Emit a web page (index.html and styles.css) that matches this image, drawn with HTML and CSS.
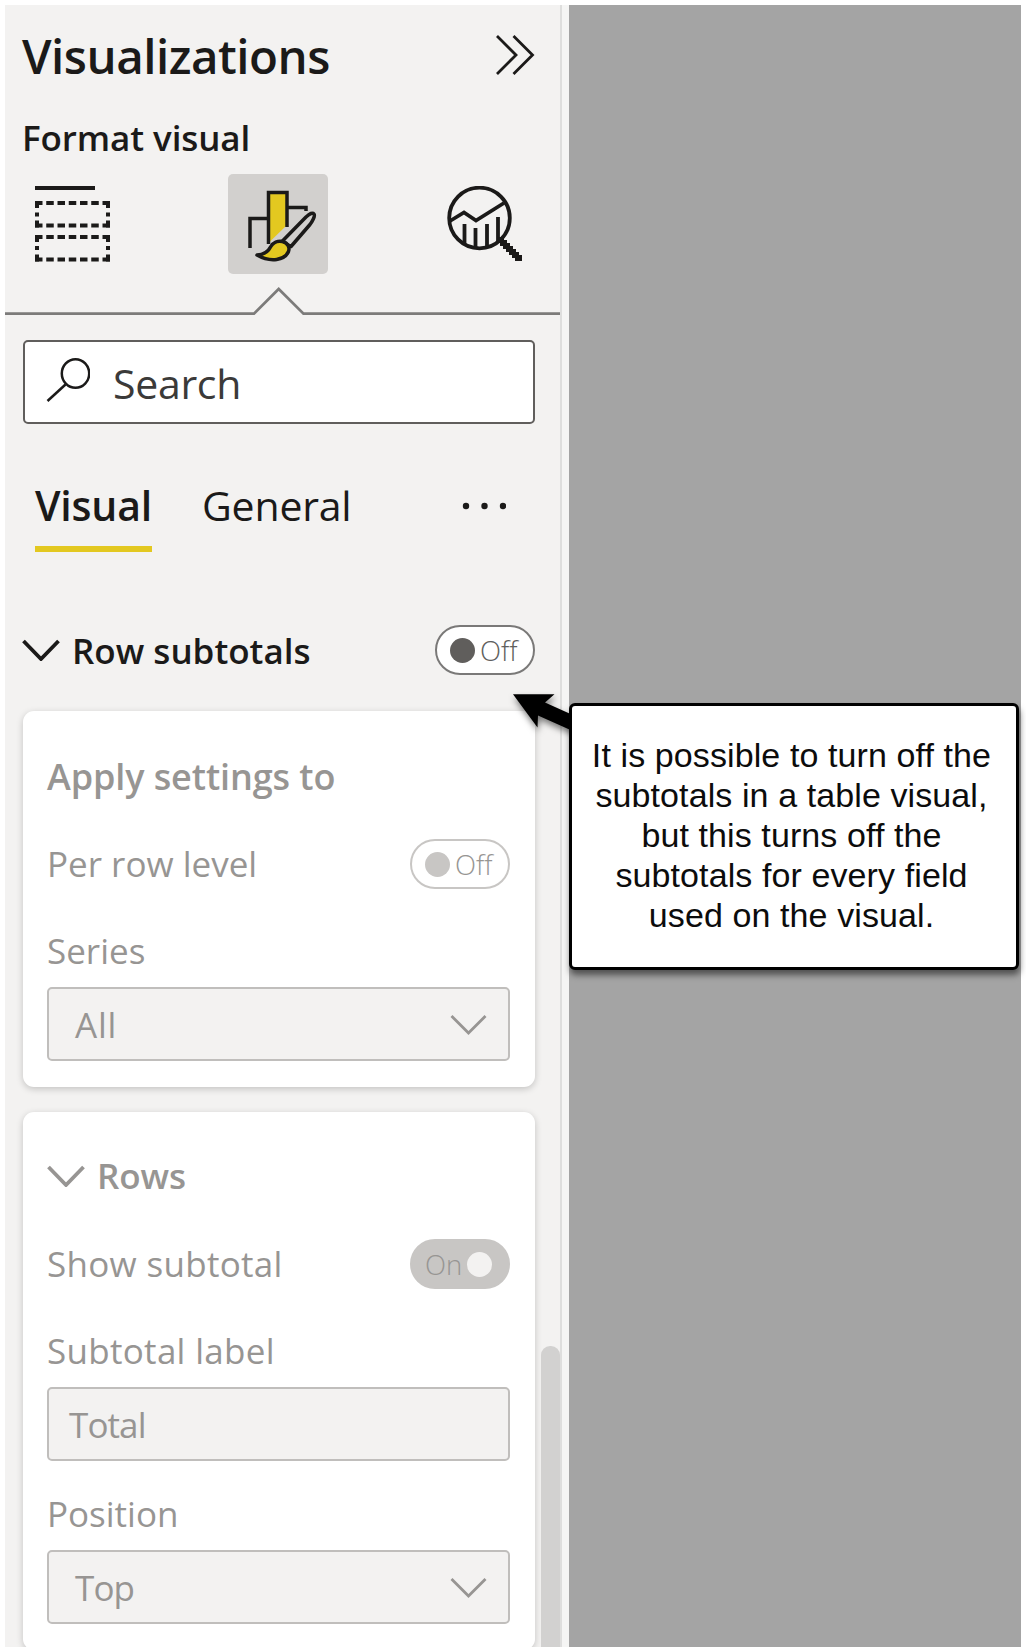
FILE: index.html
```html
<!DOCTYPE html>
<html lang="en">
<head>
<meta charset="utf-8">
<title>Visualizations</title>
<link rel="stylesheet" href="styles.css">
</head>
<body>
<main class="app">
  <section class="pane">
    <header class="pane-header">
      <h1 class="pane-title">Visualizations</h1>
      <svg class="collapse" width="40" height="42" viewBox="0 0 40 42"><path d="M2 2 21 21 2 40M18.500 2 37.500 21 18.500 40"/></svg>
    </header>
    <h2 class="pane-subtitle">Format visual</h2>
    <nav class="modes">
      <svg class="mode-fields" width="76" height="76" viewBox="0 0 76 76">
        <path d="M0 2H60" stroke-width="4"/>
        <g stroke-width="4" stroke-dasharray="7.500 3.750">
          <path d="M0 17H75M0 39.500H75M0 51H75M0 73.500H75" stroke-dashoffset="0"/>
        </g>
        <path d="M2 15V22M2 34.500V41.500M73 15V22M73 34.500V41.500M2 49V56M2 68.500V75.500M73 49V56M73 68.500V75.500M2 26.500V30.500M73 26.500V30.500M2 60V64M73 60V64" stroke-width="4"/>
      </svg>
      <div class="mode-format">
        <svg width="100" height="100" viewBox="0 0 100 100">
          <path class="bar" d="M40.500 18.500H59V51L40.500 69Z"/>
          <path class="ink" d="M22 74V44.500H39M40.500 70V18.500H59V53M60 33.500H78V37"/>
          <path class="handle" d="M54 67.500 78 43Q84 37.500 86 40C87.500 42 84 48 82 50.500L63 72.500Z"/>
          <path class="brush" d="M29 81C37 80.500 40.500 77 42.500 73C45 68.500 50 66.500 54.500 67.500C60 69 62 73.500 60.500 77.500C57 86 43 89 29 81Z"/>
        </svg>
      </div>
      <svg class="mode-analytics" width="76" height="78" viewBox="0 0 76 78">
        <circle cx="32.500" cy="32" r="30.300"/>
        <path d="M3 35 17 26.500 29 34.500 57 17"/>
        <path d="M17.500 38V58M28.500 42V62M40 38V62M51 31V55"/>
        <path class="lens-grip" d="M52 51h5v3h3v3h3v3h3v3h3v3h3v3h3v6h-7v-3h-3v-3h-3v-3h-3v-3h-3v-3h-3v-3h-3Z"/>
      </svg>
    </nav>
    <svg class="pointer-line" width="555" height="42" viewBox="0 0 555 42"><path d="M0 39.700H249L273.700 15 298.500 39.700H555"/></svg>

    <div class="search">
      <svg width="44" height="48" viewBox="0 0 44 48"><ellipse cx="29.500" cy="18.500" rx="13.700" ry="14.300"/><path d="M19.500 29.500 1.500 46"/></svg>
      <span>Search</span>
    </div>

    <div class="tabs">
      <span class="tab tab-active">Visual</span>
      <span class="tab">General</span>
      <svg class="more" width="44" height="8" viewBox="0 0 44 8"><circle cx="4" cy="4" r="3.200"/><circle cx="22.500" cy="4" r="3.200"/><circle cx="41" cy="4" r="3.200"/></svg>
    </div>

    <div class="group-row">
      <svg class="chevron" width="38" height="22" viewBox="0 0 38 22"><path d="M1.500 2 19 20 36.500 2"/></svg>
      <span class="group-name">Row subtotals</span>
      <span class="toggle"><i class="knob"></i>Off</span>
    </div>

    <section class="card">
      <h3 class="card-title apply">Apply settings to</h3>
      <div class="option"><span>Per row level</span><span class="toggle toggle-dim"><i class="knob"></i>Off</span></div>
      <div class="label series">Series</div>
      <div class="field select"><span class="value-all">All</span><svg class="caret" width="37" height="21" viewBox="0 0 37 21"><path d="M1.500 2 18.500 19 35.500 2"/></svg></div>
    </section>

    <section class="card card-rows">
      <h3 class="card-title rows"><svg class="chevron" width="38" height="22" viewBox="0 0 38 22"><path d="M1.500 2 19 20 36.500 2"/></svg>Rows</h3>
      <div class="option"><span class="wide">Show subtotal</span><span class="toggle toggle-on">On<i class="knob"></i></span></div>
      <div class="label wide">Subtotal label</div>
      <div class="field"><span class="tight">Total</span></div>
      <div class="label position">Position</div>
      <div class="field select"><span class="tight">Top</span><svg class="caret" width="37" height="21" viewBox="0 0 37 21"><path d="M1.500 2 18.500 19 35.500 2"/></svg></div>
    </section>
    <i class="scrollbar"></i>
  </section>
  <div class="gutter"></div>
  <section class="canvas"></section>
</main>
<svg class="arrow" width="64" height="46" viewBox="0 0 64 46"><path d="M2 2.300H43.500L34 10.500 64 24V40L27 23.500 26.500 35.500Z"/></svg>
<aside class="callout">It is possible to turn off the<br>subtotals in a table visual,<br>but this turns off the<br>subtotals for every field<br>used on the visual.</aside>
</body>
</html>
```
FILE: styles.css
```css
* { box-sizing: border-box; }
body {
  margin: 0;
  position: relative;
  width: 1026px;
  height: 1652px;
  overflow: hidden;
  background: #fff;
  color: #1b1a19;
  font: 35px "Open Sans", sans-serif;
}
svg { display: block; flex: none; fill: none; stroke: #1b1a19; }
h1, h2, h3 { margin: 0; font-weight: 600; }
.app {
  display: grid;
  grid-template-columns: 555px 9px 452px;
  height: 1652px;
  padding: 5px;
}
.pane {
  position: relative;
  height: 1642px;
  overflow: hidden;
  background: #f3f2f1;
}
.gutter { background: #f5f5f4; border-left: 2px solid #dededd; }
.canvas { background: #a4a4a4; }

.pane-header {
  display: flex;
  align-items: center;
  justify-content: space-between;
  height: 100px;
  padding: 0 25px 0 17px;
}
.pane-title { padding-top: 1px; font-size: 47.5px; line-height: 100px; letter-spacing: -0.5px; }
.collapse { stroke-width: 2.8; }
.pane-subtitle { height: 64px; padding: 1px 0 0 17px; font-size: 35px; line-height: 64px; letter-spacing: -0.1px; }

.modes { display: flex; height: 105px; padding: 5px 37px 0 30px; justify-content: space-between; }
.mode-fields { margin-top: 12px; }
.mode-format {
  width: 100px;
  height: 100px;
  margin-right: 2px;
  border-radius: 5px;
  background: #d2d0ce;
}
.mode-format svg { stroke-width: 3.5; }
.bar { fill: #e3c820; stroke: none; }
.handle { fill: #d2d0ce; stroke-linejoin: round; }
.brush { fill: #e3c820; stroke-linejoin: round; }
.mode-analytics { margin-top: 12px; stroke-width: 3.8; }
.lens-grip { fill: #1b1a19; stroke: none; }
.pointer-line { stroke: #7c7b7a; stroke-width: 2.7; }

.search {
  display: flex;
  gap: 23px;
  width: 512px;
  height: 84px;
  margin: 24px 0 0 18px;
  padding: 13px 0 0 21px;
  border: 2px solid #605e5c;
  border-radius: 5px;
  background: #fff;
  color: #3b3a39;
  font-size: 41px;
  line-height: 57px;
  letter-spacing: -0.3px;
}
.search svg { stroke-width: 2.5; }

.tabs {
  display: flex;
  align-items: center;
  height: 92px;
  margin-top: 36px;
  padding: 0 54px 0 30px;
}
.tab { height: 92px; margin-left: 50px; font-size: 41px; line-height: 91px; letter-spacing: -0.2px; }
.tab-active { width: 117px; margin: 0; font-weight: 600; box-shadow: inset 0 -6px #e3c820; }
.more { margin-left: auto; fill: #1b1a19; stroke: none; }

.group-row {
  display: flex;
  align-items: center;
  height: 50px;
  margin-top: 73px;
  padding: 0 25px 0 17px;
}
.chevron { stroke-width: 3.8; }
.group-name { margin-left: 12px; font-weight: 600; }
.toggle {
  display: flex;
  align-items: center;
  gap: 5px;
  width: 100px;
  height: 50px;
  margin-left: auto;
  padding-left: 13px;
  border: 2px solid #7a7978;
  border-radius: 25px;
  background: #fff;
  color: #605e5c;
  font-size: 27.5px;
  font-weight: 300;
}
.knob { width: 25px; height: 25px; border-radius: 50%; background: #605e5c; }

.card {
  width: 512px;
  height: 376px;
  margin: 36px 0 0 18px;
  padding: 24px 25px 0 24px;
  border-radius: 11px;
  background: #fff;
  box-shadow: 0 2px 7px rgba(0, 0, 0, 0.2);
  color: #979593;
}
.card svg { stroke: #979593; }
.card-rows { height: 538px; margin-top: 25px; }
.card-title { display: flex; align-items: center; font-size: 36px; letter-spacing: -0.1px; }
.apply { height: 82px; }
.rows { height: 79px; gap: 12px; font-size: 35px; }
.option { display: flex; align-items: center; height: 96px; }
.option .toggle { margin-top: 2px; }
.apply + .option { height: 94px; padding-bottom: 2px; }
.toggle-dim { border-color: #c8c6c4; color: #979593; }
.toggle-dim .knob { background: #c8c6c4; }
.toggle-on { gap: 5px; padding-left: 13px; border-color: #c8c6c4; background: #c8c6c4; color: #979593; }
.toggle-on .knob { background: #f3f2f1; }
.label { height: 76px; padding-top: 3px; line-height: 74px; }
.wide { letter-spacing: 0.3px; }
.tight { letter-spacing: -0.9px; }
.value-all { letter-spacing: 0.8px; }
.position { height: 89px; padding-top: 15px; line-height: 75px; }
.field {
  display: flex;
  align-items: center;
  justify-content: space-between;
  height: 74px;
  padding: 1px 21px 0 20px;
  border: 2px solid #c0bebc;
  border-radius: 5px;
  background: #f3f2f1;
}
.select { padding-left: 26px; }
.caret { stroke-width: 2.8; }
.scrollbar {
  position: absolute;
  left: 536px;
  top: 1341px;
  width: 19px;
  height: 310px;
  border-radius: 9px;
  background: #d2d1d0;
}

.arrow {
  position: absolute;
  left: 511px;
  top: 692px;
  fill: #000;
  stroke: none;
  filter: drop-shadow(1px 4px 3px rgba(0, 0, 0, 0.5));
}
.callout {
  position: absolute;
  left: 569px;
  top: 703px;
  width: 450px;
  height: 267px;
  padding: 29px 5px 0 0;
  border: 3px solid #000;
  border-radius: 6px;
  background: #fff;
  box-shadow: 1px 5px 6px rgba(0, 0, 0, 0.5);
  color: #0c0c0c;
  font: 34px/40px "Liberation Sans", Arial, sans-serif;
  letter-spacing: 0.1px;
  text-align: center;
  white-space: nowrap;
}
```
